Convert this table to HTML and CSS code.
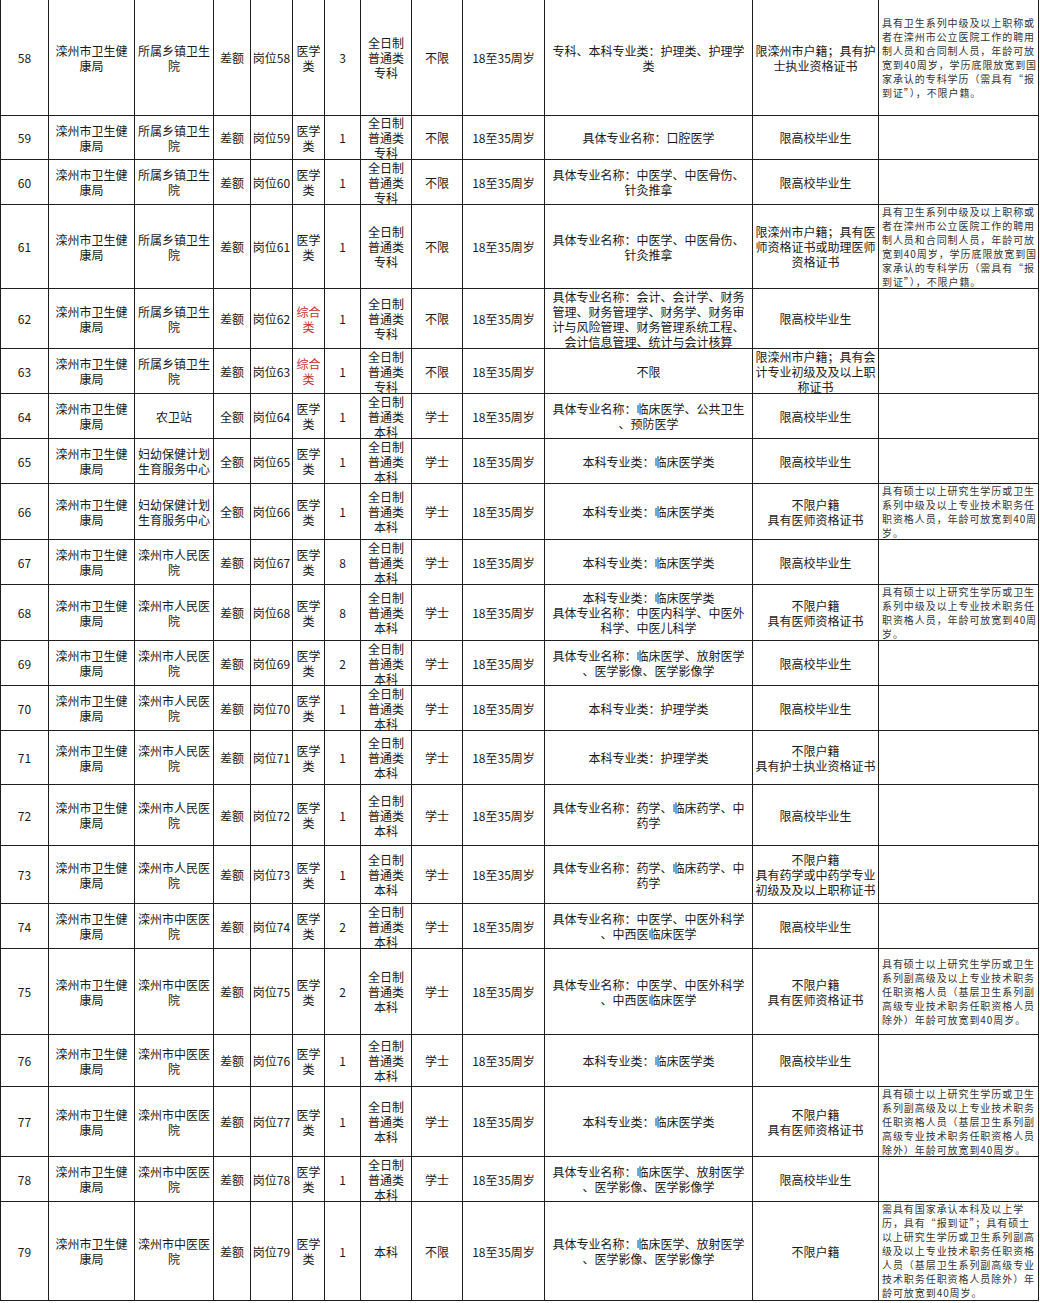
FILE: index.html
```html
<!DOCTYPE html>
<html lang="zh-CN">
<head>
<meta charset="utf-8">
<title>岗位表</title>
<link rel="stylesheet" href="styles.css">
</head>
<body>
<div class="sheet">
<div><span>58</span></div><div><span>滦州市卫生健<br>康局</span></div><div><span>所属乡镇卫生<br>院</span></div><div><span>差额</span></div><div><span>岗位58</span></div><div><span>医学<br>类</span></div><div><span>3</span></div><div><span>全日制<br>普通类<br>专科</span></div><div><span>不限</span></div><div><span>18至35周岁</span></div><div><span>专科、本科专业类：护理类、护理学<br>类</span></div><div><span>限滦州市户籍；具有护<br>士执业资格证书</span></div><div class="note"><span>具有卫生系列中级及以上职称或<br>者在滦州市公立医院工作的聘用<br>制人员和合同制人员，年龄可放<br>宽到40周岁，学历底限放宽到国<br>家承认的专科学历（需具有“报<br>到证”），不限户籍。</span></div>

<div><span>59</span></div><div><span>滦州市卫生健<br>康局</span></div><div><span>所属乡镇卫生<br>院</span></div><div><span>差额</span></div><div><span>岗位59</span></div><div><span>医学<br>类</span></div><div><span>1</span></div><div><span>全日制<br>普通类<br>专科</span></div><div><span>不限</span></div><div><span>18至35周岁</span></div><div><span>具体专业名称：口腔医学</span></div><div><span>限高校毕业生</span></div><div class="note"></div>

<div><span>60</span></div><div><span>滦州市卫生健<br>康局</span></div><div><span>所属乡镇卫生<br>院</span></div><div><span>差额</span></div><div><span>岗位60</span></div><div><span>医学<br>类</span></div><div><span>1</span></div><div><span>全日制<br>普通类<br>专科</span></div><div><span>不限</span></div><div><span>18至35周岁</span></div><div><span>具体专业名称：中医学、中医骨伤、<br>针灸推拿</span></div><div><span>限高校毕业生</span></div><div class="note"></div>

<div><span>61</span></div><div><span>滦州市卫生健<br>康局</span></div><div><span>所属乡镇卫生<br>院</span></div><div><span>差额</span></div><div><span>岗位61</span></div><div><span>医学<br>类</span></div><div><span>1</span></div><div><span>全日制<br>普通类<br>专科</span></div><div><span>不限</span></div><div><span>18至35周岁</span></div><div><span>具体专业名称：中医学、中医骨伤、<br>针灸推拿</span></div><div><span>限滦州市户籍；具有医<br>师资格证书或助理医师<br>资格证书</span></div><div class="note"><span>具有卫生系列中级及以上职称或<br>者在滦州市公立医院工作的聘用<br>制人员和合同制人员，年龄可放<br>宽到40周岁，学历底限放宽到国<br>家承认的专科学历（需具有“报<br>到证”），不限户籍。</span></div>

<div><span>62</span></div><div><span>滦州市卫生健<br>康局</span></div><div><span>所属乡镇卫生<br>院</span></div><div><span>差额</span></div><div><span>岗位62</span></div><div><span class="red">综合<br>类</span></div><div><span>1</span></div><div><span>全日制<br>普通类<br>专科</span></div><div><span>不限</span></div><div><span>18至35周岁</span></div><div><span>具体专业名称：会计、会计学、财务<br>管理、财务管理学、财务学、财务审<br>计与风险管理、财务管理系统工程、<br>会计信息管理、统计与会计核算</span></div><div><span>限高校毕业生</span></div><div class="note"></div>

<div><span>63</span></div><div><span>滦州市卫生健<br>康局</span></div><div><span>所属乡镇卫生<br>院</span></div><div><span>差额</span></div><div><span>岗位63</span></div><div><span class="red">综合<br>类</span></div><div><span>1</span></div><div><span>全日制<br>普通类<br>专科</span></div><div><span>不限</span></div><div><span>18至35周岁</span></div><div><span>不限</span></div><div><span>限滦州市户籍；具有会<br>计专业初级及及以上职<br>称证书</span></div><div class="note"></div>

<div><span>64</span></div><div><span>滦州市卫生健<br>康局</span></div><div><span>农卫站</span></div><div><span>全额</span></div><div><span>岗位64</span></div><div><span>医学<br>类</span></div><div><span>1</span></div><div><span>全日制<br>普通类<br>本科</span></div><div><span>学士</span></div><div><span>18至35周岁</span></div><div><span>具体专业名称：临床医学、公共卫生<br>、预防医学</span></div><div><span>限高校毕业生</span></div><div class="note"></div>

<div><span>65</span></div><div><span>滦州市卫生健<br>康局</span></div><div><span>妇幼保健计划<br>生育服务中心</span></div><div><span>全额</span></div><div><span>岗位65</span></div><div><span>医学<br>类</span></div><div><span>1</span></div><div><span>全日制<br>普通类<br>本科</span></div><div><span>学士</span></div><div><span>18至35周岁</span></div><div><span>本科专业类：临床医学类</span></div><div><span>限高校毕业生</span></div><div class="note"></div>

<div><span>66</span></div><div><span>滦州市卫生健<br>康局</span></div><div><span>妇幼保健计划<br>生育服务中心</span></div><div><span>全额</span></div><div><span>岗位66</span></div><div><span>医学<br>类</span></div><div><span>1</span></div><div><span>全日制<br>普通类<br>本科</span></div><div><span>学士</span></div><div><span>18至35周岁</span></div><div><span>本科专业类：临床医学类</span></div><div><span>不限户籍<br>具有医师资格证书</span></div><div class="note"><span>具有硕士以上研究生学历或卫生<br>系列中级及以上专业技术职务任<br>职资格人员，年龄可放宽到40周<br>岁。</span></div>

<div><span>67</span></div><div><span>滦州市卫生健<br>康局</span></div><div><span>滦州市人民医<br>院</span></div><div><span>差额</span></div><div><span>岗位67</span></div><div><span>医学<br>类</span></div><div><span>8</span></div><div><span>全日制<br>普通类<br>本科</span></div><div><span>学士</span></div><div><span>18至35周岁</span></div><div><span>本科专业类：临床医学类</span></div><div><span>限高校毕业生</span></div><div class="note"></div>

<div><span>68</span></div><div><span>滦州市卫生健<br>康局</span></div><div><span>滦州市人民医<br>院</span></div><div><span>差额</span></div><div><span>岗位68</span></div><div><span>医学<br>类</span></div><div><span>8</span></div><div><span>全日制<br>普通类<br>本科</span></div><div><span>学士</span></div><div><span>18至35周岁</span></div><div><span>本科专业类：临床医学类<br>具体专业名称：中医内科学、中医外<br>科学、中医儿科学</span></div><div><span>不限户籍<br>具有医师资格证书</span></div><div class="note"><span>具有硕士以上研究生学历或卫生<br>系列中级及以上专业技术职务任<br>职资格人员，年龄可放宽到40周<br>岁。</span></div>

<div><span>69</span></div><div><span>滦州市卫生健<br>康局</span></div><div><span>滦州市人民医<br>院</span></div><div><span>差额</span></div><div><span>岗位69</span></div><div><span>医学<br>类</span></div><div><span>2</span></div><div><span>全日制<br>普通类<br>本科</span></div><div><span>学士</span></div><div><span>18至35周岁</span></div><div><span>具体专业名称：临床医学、放射医学<br>、医学影像、医学影像学</span></div><div><span>限高校毕业生</span></div><div class="note"></div>

<div><span>70</span></div><div><span>滦州市卫生健<br>康局</span></div><div><span>滦州市人民医<br>院</span></div><div><span>差额</span></div><div><span>岗位70</span></div><div><span>医学<br>类</span></div><div><span>1</span></div><div><span>全日制<br>普通类<br>本科</span></div><div><span>学士</span></div><div><span>18至35周岁</span></div><div><span>本科专业类：护理学类</span></div><div><span>限高校毕业生</span></div><div class="note"></div>

<div><span>71</span></div><div><span>滦州市卫生健<br>康局</span></div><div><span>滦州市人民医<br>院</span></div><div><span>差额</span></div><div><span>岗位71</span></div><div><span>医学<br>类</span></div><div><span>1</span></div><div><span>全日制<br>普通类<br>本科</span></div><div><span>学士</span></div><div><span>18至35周岁</span></div><div><span>本科专业类：护理学类</span></div><div><span>不限户籍<br>具有护士执业资格证书</span></div><div class="note"></div>

<div><span>72</span></div><div><span>滦州市卫生健<br>康局</span></div><div><span>滦州市人民医<br>院</span></div><div><span>差额</span></div><div><span>岗位72</span></div><div><span>医学<br>类</span></div><div><span>1</span></div><div><span>全日制<br>普通类<br>本科</span></div><div><span>学士</span></div><div><span>18至35周岁</span></div><div><span>具体专业名称：药学、临床药学、中<br>药学</span></div><div><span>限高校毕业生</span></div><div class="note"></div>

<div><span>73</span></div><div><span>滦州市卫生健<br>康局</span></div><div><span>滦州市人民医<br>院</span></div><div><span>差额</span></div><div><span>岗位73</span></div><div><span>医学<br>类</span></div><div><span>1</span></div><div><span>全日制<br>普通类<br>本科</span></div><div><span>学士</span></div><div><span>18至35周岁</span></div><div><span>具体专业名称：药学、临床药学、中<br>药学</span></div><div><span>不限户籍<br>具有药学或中药学专业<br>初级及及以上职称证书</span></div><div class="note"></div>

<div><span>74</span></div><div><span>滦州市卫生健<br>康局</span></div><div><span>滦州市中医医<br>院</span></div><div><span>差额</span></div><div><span>岗位74</span></div><div><span>医学<br>类</span></div><div><span>2</span></div><div><span>全日制<br>普通类<br>本科</span></div><div><span>学士</span></div><div><span>18至35周岁</span></div><div><span>具体专业名称：中医学、中医外科学<br>、中西医临床医学</span></div><div><span>限高校毕业生</span></div><div class="note"></div>

<div><span>75</span></div><div><span>滦州市卫生健<br>康局</span></div><div><span>滦州市中医医<br>院</span></div><div><span>差额</span></div><div><span>岗位75</span></div><div><span>医学<br>类</span></div><div><span>2</span></div><div><span>全日制<br>普通类<br>本科</span></div><div><span>学士</span></div><div><span>18至35周岁</span></div><div><span>具体专业名称：中医学、中医外科学<br>、中西医临床医学</span></div><div><span>不限户籍<br>具有医师资格证书</span></div><div class="note"><span>具有硕士以上研究生学历或卫生<br>系列副高级及以上专业技术职务<br>任职资格人员（基层卫生系列副<br>高级专业技术职务任职资格人员<br>除外）年龄可放宽到40周岁。</span></div>

<div><span>76</span></div><div><span>滦州市卫生健<br>康局</span></div><div><span>滦州市中医医<br>院</span></div><div><span>差额</span></div><div><span>岗位76</span></div><div><span>医学<br>类</span></div><div><span>1</span></div><div><span>全日制<br>普通类<br>本科</span></div><div><span>学士</span></div><div><span>18至35周岁</span></div><div><span>本科专业类：临床医学类</span></div><div><span>限高校毕业生</span></div><div class="note"></div>

<div><span>77</span></div><div><span>滦州市卫生健<br>康局</span></div><div><span>滦州市中医医<br>院</span></div><div><span>差额</span></div><div><span>岗位77</span></div><div><span>医学<br>类</span></div><div><span>1</span></div><div><span>全日制<br>普通类<br>本科</span></div><div><span>学士</span></div><div><span>18至35周岁</span></div><div><span>本科专业类：临床医学类</span></div><div><span>不限户籍<br>具有医师资格证书</span></div><div class="note"><span>具有硕士以上研究生学历或卫生<br>系列副高级及以上专业技术职务<br>任职资格人员（基层卫生系列副<br>高级专业技术职务任职资格人员<br>除外）年龄可放宽到40周岁。</span></div>

<div><span>78</span></div><div><span>滦州市卫生健<br>康局</span></div><div><span>滦州市中医医<br>院</span></div><div><span>差额</span></div><div><span>岗位78</span></div><div><span>医学<br>类</span></div><div><span>1</span></div><div><span>全日制<br>普通类<br>本科</span></div><div><span>学士</span></div><div><span>18至35周岁</span></div><div><span>具体专业名称：临床医学、放射医学<br>、医学影像、医学影像学</span></div><div><span>限高校毕业生</span></div><div class="note"></div>

<div><span>79</span></div><div><span>滦州市卫生健<br>康局</span></div><div><span>滦州市中医医<br>院</span></div><div><span>差额</span></div><div><span>岗位79</span></div><div><span>医学<br>类</span></div><div><span>1</span></div><div><span>本科</span></div><div><span>不限</span></div><div><span>18至35周岁</span></div><div><span>具体专业名称：临床医学、放射医学<br>、医学影像、医学影像学</span></div><div><span>不限户籍</span></div><div class="note"><span>需具有国家承认本科及以上学<br>历，具有“报到证”；具有硕士<br>以上研究生学历或卫生系列副高<br>级及以上专业技术职务任职资格<br>人员（基层卫生系列副高级专业<br>技术职务任职资格人员除外）年<br>龄可放宽到40周岁。</span></div>
</div>
</body>
</html>
```

FILE: styles.css
```css
html, body {
  margin: 0;
  padding: 0;
  background: #ffffff;
}

body {
  font-family: "Noto Sans CJK SC", "Noto Sans", "Liberation Sans", sans-serif;
  font-size: 12px;
  color: #1a1a1a;
}

.sheet {
  display: grid;
  width: 1039px;
  grid-template-columns: 48px 86px 79px 37px 42px 32px 36px 51px 51px 82px 208px 126px 160px;
  grid-template-rows: 116px 44px 45px 84px 60px 45px 45px 45px 56px 45px 56px 45px 45px 54px 61px 58px 45px 86px 52px 70px 45px 99px;
  border-left: 1px solid #1e1e1e;
}

.sheet > div {
  box-sizing: border-box;
  border-right: 1px solid #1e1e1e;
  border-bottom: 1px solid #1e1e1e;
  display: flex;
  align-items: center;
  justify-content: center;
  overflow: hidden;
  text-align: center;
  white-space: nowrap;
  line-height: 15px;
}

.sheet > div > span {
  display: block;
}

.sheet > .note {
  justify-content: flex-start;
  text-align: left;
  padding-left: 3px;
  font-size: 10px;
  letter-spacing: 0.93px;
  line-height: 14px;
  color: #333333;
}

.red {
  color: #c8332f;
}
```
